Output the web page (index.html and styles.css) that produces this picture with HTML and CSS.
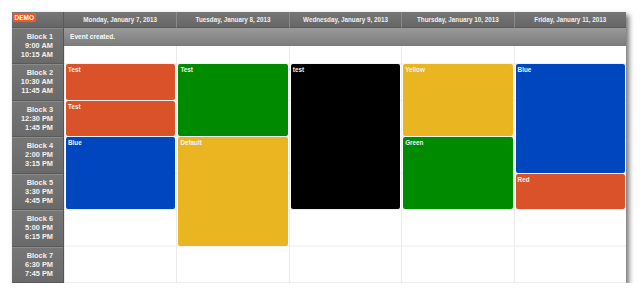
FILE: index.html
```html
<!DOCTYPE html>
<html>
<head>
<meta charset="utf-8">
<link rel="stylesheet" href="styles.css">
</head>
<body>
<div class="page">
  <div class="cal">
    <div class="corner"><span class="demo">DEMO</span></div>
    <div class="colhead">Monday, January 7, 2013</div>
    <div class="colhead">Tuesday, January 8, 2013</div>
    <div class="colhead">Wednesday, January 9, 2013</div>
    <div class="colhead">Thursday, January 10, 2013</div>
    <div class="colhead">Friday, January 11, 2013</div>

    <div class="rowheads">
      <div class="rowhead">Block 1<br>9:00 AM<br>10:15 AM</div>
      <div class="rowhead">Block 2<br>10:30 AM<br>11:45 AM</div>
      <div class="rowhead">Block 3<br>12:30 PM<br>1:45 PM</div>
      <div class="rowhead">Block 4<br>2:00 PM<br>3:15 PM</div>
      <div class="rowhead">Block 5<br>3:30 PM<br>4:45 PM</div>
      <div class="rowhead">Block 6<br>5:00 PM<br>6:15 PM</div>
      <div class="rowhead">Block 7<br>6:30 PM<br>7:45 PM</div>
    </div>

    <div class="day">
      <div class="ev red" style="grid-row: 2 / span 1">Test</div>
      <div class="ev red" style="grid-row: 3 / span 1">Test</div>
      <div class="ev blue" style="grid-row: 4 / span 2">Blue</div>
    </div>
    <div class="day">
      <div class="ev green" style="grid-row: 2 / span 2">Test</div>
      <div class="ev yellow" style="grid-row: 4 / span 3">Default</div>
    </div>
    <div class="day">
      <div class="ev black" style="grid-row: 2 / span 4">test</div>
    </div>
    <div class="day">
      <div class="ev yellow" style="grid-row: 2 / span 2">Yellow</div>
      <div class="ev green" style="grid-row: 4 / span 2">Green</div>
    </div>
    <div class="day">
      <div class="ev blue" style="grid-row: 2 / span 3">Blue</div>
      <div class="ev red" style="grid-row: 5 / span 1">Red</div>
    </div>

    <div class="message">Event created.</div>
  </div>
</div>
</body>
</html>
```
FILE: styles.css
```css
html, body {
  margin: 0;
  padding: 0;
  background: #ffffff;
}
.page {
  padding: 12px 0 0 12px;
}
.cal {
  position: relative;
  width: 614px;
  height: 271px;
  display: grid;
  grid-template-columns: 52px repeat(5, 1fr);
  grid-template-rows: 16px 1fr;
  background: #fff;
  box-shadow: 3px 3px 5px rgba(0, 0, 0, 0.55);
  font-family: "Liberation Sans", Arial, sans-serif;
}
.corner {
  background: linear-gradient(#777, #666);
  border-right: 1px solid #5a5a5a;
  border-bottom: 1px solid #5a5a5a;
  box-sizing: border-box;
  padding: 1px 0 0 1px;
  display: flex;
  align-items: flex-start;
}
.demo {
  display: block;
  background: #f4571f;
  color: #fff;
  font-size: 6.5px;
  font-weight: bold;
  line-height: 9px;
  padding: 0 1.5px;
  border-radius: 1px;
}
.colhead {
  background: linear-gradient(#767676, #666);
  border-left: 1px solid #8a8a8a;
  border-bottom: 1px solid #5a5a5a;
  box-sizing: border-box;
  color: #f0f0f0;
  font-size: 6.3px;
  font-weight: bold;
  display: flex;
  align-items: center;
  justify-content: center;
  white-space: nowrap;
}
.colhead:nth-child(2) {
  border-left: none;
}
.rowheads {
  display: grid;
  grid-template-rows: repeat(7, 1fr);
  border-right: 1px solid #555;
}
.rowhead {
  background: linear-gradient(#767676, #6a6a6a);
  border-top: 1px solid #8a8a8a;
  border-bottom: 1px solid #5a5a5a;
  color: #f2f2f2;
  font-size: 7.4px;
  font-weight: bold;
  line-height: 9px;
  text-align: right;
  padding: 3px 10px 0 0;
}
.day {
  display: grid;
  grid-template-rows: repeat(7, 1fr);
  border-left: 1px solid #ebebeb;
  background-image: linear-gradient(to top, #ebebeb 1px, transparent 1px);
  background-size: 100% calc(100% / 7);
}
.day:nth-of-type(3) {
  border-left: none;
}
.ev {
  margin: 0 1px 1px 1px;
  border-radius: 2px;
  color: #f3f3f3;
  font-size: 6.3px;
  font-weight: bold;
  padding: 2px 2px;
  line-height: 8px;
}
.red { background: #d9522a; }
.green { background: #008a00; }
.blue { background: #0047bf; }
.yellow { background: #e9b521; }
.black { background: #000; }
.message {
  position: absolute;
  left: 52px;
  right: 0;
  top: 16px;
  height: 18px;
  background: linear-gradient(#9a9a9a, #7a7a7a);
  color: #fafafa;
  font-size: 6.6px;
  font-weight: bold;
  line-height: 18px;
  padding-left: 6px;
}
```
